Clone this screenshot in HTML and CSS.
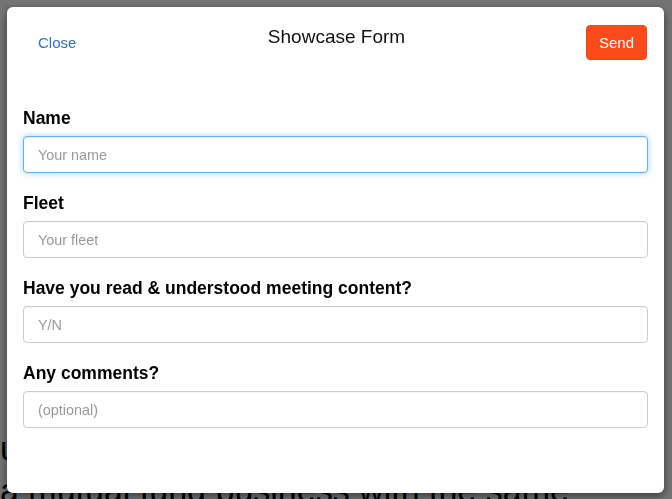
FILE: index.html
```html
<!DOCTYPE html>
<html lang="en">
<head>
<meta charset="utf-8">
<title>Showcase Form</title>
<link rel="stylesheet" href="styles.css">
</head>
<body>
<div class="page">
  <p class="page-text">understand</p>
  <p class="page-text">a mutual fund business with the same</p>
</div>
<div class="overlay">
  <div class="modal">
    <div class="modal-header">
      <button class="btn-close" type="button">Close</button>
      <h1 class="modal-title">Showcase Form</h1>
      <div class="header-right">
        <button class="btn-send" type="button">Send</button>
      </div>
    </div>
    <form class="modal-body">
      <div class="form-group">
        <label class="form-label" for="name">Name</label>
        <input class="form-input is-focused" id="name" type="text" placeholder="Your name">
      </div>
      <div class="form-group">
        <label class="form-label" for="fleet">Fleet</label>
        <input class="form-input" id="fleet" type="text" placeholder="Your fleet">
      </div>
      <div class="form-group">
        <label class="form-label" for="read">Have you read &amp; understood meeting content?</label>
        <input class="form-input" id="read" type="text" placeholder="Y/N">
      </div>
      <div class="form-group">
        <label class="form-label" for="comments">Any comments?</label>
        <input class="form-input" id="comments" type="text" placeholder="(optional)">
      </div>
    </form>
  </div>
</div>
</body>
</html>
```
FILE: styles.css
```css
* { box-sizing: border-box; }

html, body {
  margin: 0;
  padding: 0;
  height: 100%;
  overflow: hidden;
}

body {
  background: #fff;
  font-family: "Liberation Sans", Arial, Helvetica, sans-serif;
  color: #000;
}

.page {
  padding: 427px 0 0 0;
  width: 100%;
  overflow: hidden;
}

.page-text {
  margin: 0;
  font-size: 34px;
  line-height: 42px;
  color: #000;
  white-space: nowrap;
}

.overlay {
  position: fixed;
  inset: 0;
  background: rgba(0, 0, 0, 0.55);
}

.modal {
  position: absolute;
  left: 7px;
  top: 7px;
  width: 657px;
  height: 486px;
  background: #fff;
  border-radius: 6px;
  box-shadow: 0 3px 9px rgba(0, 0, 0, 0.5);
  display: flex;
  flex-direction: column;
}

.modal-header {
  display: grid;
  grid-template-columns: 1fr auto 1fr;
  align-items: start;
  padding: 18px 17px 0 19px;
}

.btn-close {
  justify-self: start;
  background: none;
  border: 0;
  padding: 0 12px;
  height: 35px;
  font-family: inherit;
  font-size: 15px;
  line-height: 35px;
  color: #3470b3;
  cursor: pointer;
}

.modal-title {
  margin: 1px 0 0;
  font-size: 19px;
  line-height: 22px;
  font-weight: normal;
  color: #111;
}

.header-right {
  display: flex;
  justify-content: flex-end;
}

.btn-send {
  width: 61px;
  height: 35px;
  padding: 0;
  background: #fb4b1b;
  border: 1px solid #f0461a;
  border-radius: 4px;
  color: #fff;
  font-family: inherit;
  font-size: 15px;
  line-height: 33px;
  cursor: pointer;
}

.modal-body {
  display: flex;
  flex-direction: column;
  gap: 20px;
  padding: 48px 16px 0 16px;
}

.form-group {
  display: flex;
  flex-direction: column;
}

.form-label {
  font-size: 17.5px;
  line-height: 20px;
  font-weight: bold;
  margin: 0 0 8px 0;
  color: #000;
}

.form-input {
  height: 37px;
  width: 100%;
  padding: 0 14px;
  border: 1px solid #cccccc;
  border-radius: 4px;
  background: #fff;
  font-family: inherit;
  font-size: 14.4px;
  color: #333;
  outline: none;
  box-shadow: inset 0 1px 1px rgba(0, 0, 0, 0.04);
}

.form-input::placeholder {
  color: #999;
}

.form-input.is-focused {
  border-color: #66afe9;
  box-shadow: inset 0 1px 1px rgba(0, 0, 0, 0.075), 0 0 6px rgba(102, 175, 233, 0.6);
}
```
